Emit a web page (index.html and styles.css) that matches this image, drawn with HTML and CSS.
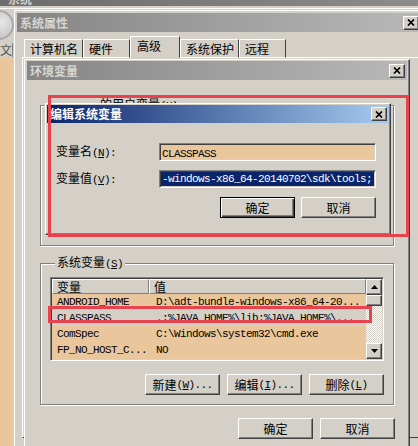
FILE: index.html
```html
<!DOCTYPE html>
<html lang="zh-CN">
<head>
    <meta charset="UTF-8">
    <meta name="viewport" content="width=device-width, initial-scale=1.0">
    <title>编辑系统变量</title>
    <link rel="stylesheet" href="styles.css">
</head>
<body>
<div class="desk">
    <!-- windows lying behind -->
    <div class="back-title"><span>系统</span></div>
    <div class="back-rule"></div>
    <div class="back-icon"></div>
    <div class="back-label">文</div>
    <div class="back-strip"></div>
    <div class="back-corner">可</div>

    <div class="win sysprop">
        <div class="titlebar inactive">
            <span>系统属性</span>
            <span class="close"><svg width="8" height="7" viewBox="0 0 8 7"><path d="M1 0.5L7 6.5M7 0.5L1 6.5" stroke="#000" stroke-width="1.7"/></svg></span>
        </div>
        <div class="tabs">
            <span class="tab">计算机名</span>
            <span class="tab">硬件</span>
            <span class="tab on">高级</span>
            <span class="tab">系统保护</span>
            <span class="tab">远程</span>
        </div>
        <div class="tabpage"></div>
    </div>

    <div class="win env">
        <div class="titlebar inactive">
            <span>环境变量</span>
            <span class="close"><svg width="8" height="7" viewBox="0 0 8 7"><path d="M1 0.5L7 6.5M7 0.5L1 6.5" stroke="#000" stroke-width="1.7"/></svg></span>
        </div>
        <div class="env-body">
            <fieldset class="group user-group">
                <legend>的用户变量<span class="lat">(<u>U</u>)</span></legend>
            </fieldset>

            <fieldset class="group sys-group">
                <legend>系统变量<span class="lat">(<u>S</u>)</span></legend>
                <div class="list">
                    <div class="list-main">
                        <div class="list-head">
                            <span class="hcell name">变量</span>
                            <span class="hcell value">值</span>
                        </div>
                        <div class="row">
                            <span class="name">ANDROID_HOME</span>
                            <span class="value">D:\adt-bundle-windows-x86_64-20...</span>
                        </div>
                        <div class="row picked">
                            <span class="name">CLASSPASS</span>
                            <span class="value">.;%JAVA_HOME%\lib;%JAVA_HOME%\...</span>
                        </div>
                        <div class="row">
                            <span class="name">ComSpec</span>
                            <span class="value">C:\Windows\system32\cmd.exe</span>
                        </div>
                        <div class="row">
                            <span class="name">FP_NO_HOST_C...</span>
                            <span class="value">NO</span>
                        </div>
                    </div>
                    <div class="scroll">
                        <span class="sbtn"><svg width="7" height="4" viewBox="0 0 7 4"><path d="M3.5 0L7 4H0Z" fill="#000"/></svg></span>
                        <span class="thumb"></span>
                        <span class="track"></span>
                        <span class="sbtn"><svg width="7" height="4" viewBox="0 0 7 4"><path d="M0 0H7L3.5 4Z" fill="#000"/></svg></span>
                    </div>
                </div>
                <div class="btn-row">
                    <span class="btn">新建<span class="lat">(<u>W</u>)...</span></span>
                    <span class="btn">编辑<span class="lat">(<u>I</u>)...</span></span>
                    <span class="btn">删除<span class="lat">(<u>L</u>)</span></span>
                </div>
            </fieldset>

            <div class="btn-row footer">
                <span class="btn">确定</span>
                <span class="btn">取消</span>
            </div>
        </div>
    </div>

    <div class="win edit">
        <div class="titlebar active">
            <span>编辑系统变量</span>
            <span class="close"><svg width="8" height="7" viewBox="0 0 8 7"><path d="M1 0.5L7 6.5M7 0.5L1 6.5" stroke="#000" stroke-width="1.7"/></svg></span>
        </div>
        <div class="edit-body">
            <div class="field">
                <label>变量名<span class="lat">(<u>N</u>):</span></label>
                <div class="input tan"><span class="lat">CLASSPASS</span></div>
            </div>
            <div class="field">
                <label>变量值<span class="lat">(<u>V</u>):</span></label>
                <div class="input"><span class="lat sel">-windows-x86_64-20140702\sdk\tools;</span></div>
            </div>
            <div class="btn-row dialog-btns">
                <span class="btn default">确定</span>
                <span class="btn">取消</span>
            </div>
        </div>
    </div>

    <!-- red annotation boxes drawn over the screenshot -->
    <div class="mark mark-dialog"></div>
    <div class="mark mark-row"></div>
</div>
</body>
</html>
```

FILE: styles.css
```css
:root {
    --face: #d4d0c8;
    --shadow: #808080;
    --dark: #404040;
    --tan: #e9c69c;
    --navy: #0a246a;
    --red: #e8434c;
}

* {
    margin: 0;
    padding: 0;
    box-sizing: border-box;
}

body {
    width: 418px;
    height: 446px;
    overflow: hidden;
    background: var(--face);
    color: #000;
    font: 12px/14px "Noto Sans CJK SC", sans-serif;
}

.desk {
    position: relative;
    width: 418px;
    height: 446px;
    overflow: hidden;
}

.lat {
    font-family: "Liberation Mono", monospace;
    font-size: 11px;
    letter-spacing: -0.6px;
}

/* back window bits */
.back-title {
    height: 6px;
    overflow: hidden;
    background: linear-gradient(90deg, #6c6c6c, #8c8c8c);
    color: #cfcfcf;
    font-weight: bold;
    padding-left: 8px;
}

.back-title span {
    display: block;
    margin-top: -8px;
}

.back-rule {
    height: 1px;
    margin-top: 2px;
    background: #fff;
}

.back-icon {
    position: absolute;
    left: -16px;
    top: 10px;
    width: 30px;
    height: 30px;
    border-radius: 50%;
    border: 2px solid #a8a8a8;
    background: radial-gradient(circle at 60% 40%, #e8e8e8, #b8b8b8);
}

.back-label {
    position: absolute;
    left: 0;
    top: 43px;
    width: 13px;
    height: 14px;
    border-right: 1px solid #808080;
    line-height: 14px;
    color: #555;
}

.back-strip {
    position: absolute;
    left: 0;
    top: 57px;
    width: 13px;
    height: 389px;
    background: var(--tan);
}

.back-corner {
    position: absolute;
    left: 408px;
    top: 434px;
    font-size: 11px;
}

/* window chrome */
.win {
    position: absolute;
    background: var(--face);
    border: 1px solid;
    border-color: #fff var(--dark) var(--dark) #fff;
    box-shadow: inset -1px -1px var(--shadow);
}

.titlebar {
    display: flex;
    align-items: center;
    justify-content: space-between;
    height: 19px;
    padding: 0 2px 0 3px;
    font-weight: bold;
    line-height: 16px;
}

.inactive {
    background: linear-gradient(90deg, #858585, #b8b8b8);
    color: #d8d6d0;
}

.active {
    height: 18px;
    background: linear-gradient(90deg, var(--navy), #a6caf0);
    color: #fff;
}

.close {
    display: flex;
    align-items: center;
    justify-content: center;
    width: 16px;
    height: 14px;
    background: var(--face);
    border: 1px solid;
    border-color: #fff var(--dark) var(--dark) #fff;
    box-shadow: inset -1px -1px var(--shadow);
}

.btn {
    display: flex;
    align-items: center;
    justify-content: center;
    width: 75px;
    height: 21px;
    background: var(--face);
    border: 1px solid;
    border-color: #fff var(--dark) var(--dark) #fff;
    box-shadow: inset -1px -1px var(--shadow);
    line-height: 14px;
}

.btn.default {
    border-color: #000;
    box-shadow: inset 1px 1px #fff, inset -1px -1px var(--dark), inset -2px -2px var(--shadow);
}

.btn-row {
    display: flex;
    justify-content: flex-end;
    gap: 7px;
}

/* 系统属性 */
.sysprop {
    left: 14px;
    top: 10px;
    width: 410px;
    height: 440px;
    padding: 2px;
}

.tabs {
    display: flex;
    align-items: flex-end;
    height: 22px;
    margin-top: 4px;
    padding-left: 7px;
}

.tab {
    min-width: 47px;
    height: 19px;
    padding: 0 4px 0 5px;
    border: 1px solid;
    border-color: #fff var(--dark) transparent #fff;
    line-height: 18px;
}

.tab.on {
    position: relative;
    z-index: 1;
    width: 50px;
    height: 22px;
    padding-left: 6px;
    background: var(--face);
    line-height: 17px;
}

.tabpage {
    height: 381px;
    margin: -1px 0 0 5px;
    border: 1px solid;
    border-color: #fff var(--dark) var(--dark) #fff;
}

/* 环境变量 */
.env {
    left: 24px;
    top: 59px;
    width: 386px;
    height: 400px;
    padding: 1px 2px;
}

.env-body {
    padding: 0 13px;
}

.group {
    border: 1px solid var(--shadow);
    box-shadow: inset 1px 1px #fff, 1px 1px #fff;
}

.group legend {
    margin-left: 5px;
    padding: 0 2px;
    line-height: 12px;
    background: var(--face);
}

.user-group {
    height: 148px;
    margin-top: 18px;
}

.user-group legend {
    margin-left: 57px;
}

.sys-group {
    margin-top: 10px;
    padding: 7px 9px 9px;
}

.list {
    display: flex;
    height: 84px;
    background: var(--tan);
    border: 1px solid;
    border-color: var(--shadow) #fff #fff var(--shadow);
    box-shadow: inset 1px 1px var(--dark), inset -1px -1px var(--face);
    padding: 1px;
}

.list-main {
    flex: 1;
}

.list-head {
    display: flex;
    height: 15px;
    background: var(--face);
}

.hcell {
    border: 1px solid;
    border-color: #fff var(--shadow) var(--shadow) #fff;
    padding-left: 4px;
    line-height: 13px;
}

.hcell.name {
    width: 97px;
}

.hcell.value {
    flex: 1;
}

.row {
    display: flex;
    height: 16px;
    line-height: 16px;
    font-family: "Liberation Mono", monospace;
    font-size: 11px;
    letter-spacing: -0.6px;
    white-space: nowrap;
}

.row.picked {
    background: var(--face);
}

.row .name {
    width: 97px;
    padding-left: 5px;
}

.row .value {
    padding-left: 7px;
}

.scroll {
    display: flex;
    flex-direction: column;
    width: 16px;
}

.sbtn,
.thumb {
    display: flex;
    align-items: center;
    justify-content: center;
    height: 16px;
    background: var(--face);
    border: 1px solid;
    border-color: #fff var(--dark) var(--dark) #fff;
    box-shadow: inset -1px -1px var(--shadow);
}

.thumb {
    height: 11px;
}

.track {
    flex: 1;
    background: repeating-conic-gradient(#fff 0 25%, var(--face) 0 50%) 0 0 / 2px 2px;
}

.sys-group .btn-row {
    margin-top: 13px;
}

.footer {
    margin: 13px -1px 0 0;
}

/* 编辑系统变量 */
.edit {
    left: 45px;
    top: 103px;
    width: 346px;
    height: 132px;
    padding: 1px;
}

.edit-body {
    padding: 20px 13px 0 9px;
}

.field {
    display: flex;
    align-items: center;
    height: 18px;
    margin-bottom: 9px;
}

.field label {
    width: 103px;
}

.input {
    flex: 1;
    height: 18px;
    overflow: hidden;
    white-space: nowrap;
    background: #fff;
    border: 1px solid;
    border-color: var(--shadow) #fff #fff var(--shadow);
    box-shadow: inset 1px 1px var(--dark), inset -1px -1px var(--face);
    padding: 1px;
    line-height: 14px;
}

.input.tan {
    background: var(--tan);
    padding-left: 2px;
}

.input .sel {
    display: block;
    height: 14px;
    background: var(--navy);
    color: #fff;
    padding-left: 1px;
}

.dialog-btns {
    gap: 6px;
    margin-top: 2px;
}

/* red annotations */
.mark {
    position: absolute;
    border: 3px solid var(--red);
}

.mark-dialog {
    left: 48px;
    top: 95px;
    width: 361px;
    height: 142px;
}

.mark-row {
    left: 48px;
    top: 306px;
    width: 324px;
    height: 17px;
}
```
